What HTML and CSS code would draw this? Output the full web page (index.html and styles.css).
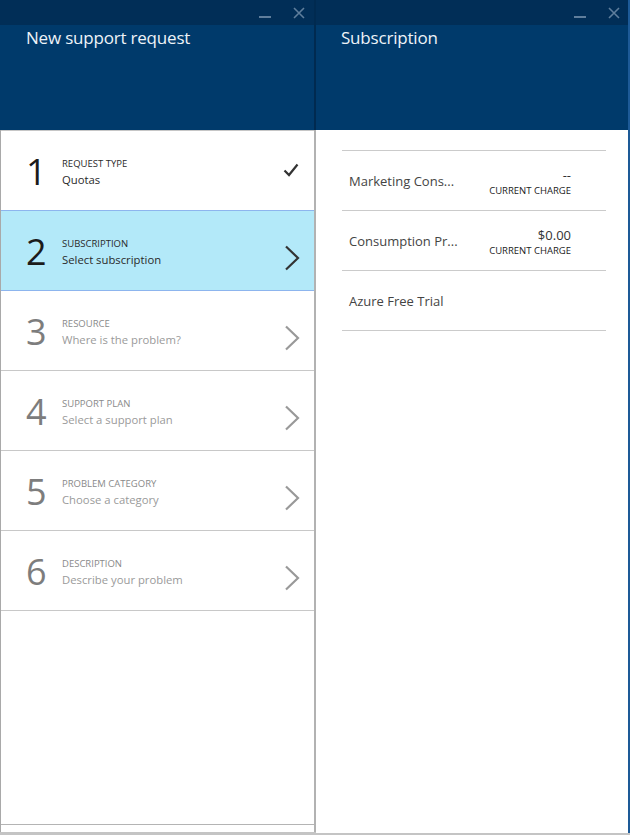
FILE: index.html
```html
<!DOCTYPE html>
<html lang="en">
<head>
<meta charset="utf-8">
<title>New support request</title>
<link rel="stylesheet" href="styles.css">
</head>
<body>
<div class="blades">
  <section class="blade blade-left">
    <header class="blade-header">
      <div class="topbar">
        <span class="ctl ctl-min"></span>
        <svg class="ctl-close" width="12" height="12" viewBox="0 0 12 12"><path d="M1 1L11 11M11 1L1 11" stroke="#5f7e9c" stroke-width="1.6" fill="none"/></svg>
      </div>
      <h1 class="blade-title">New support request</h1>
    </header>
    <div class="blade-body">
      <ul class="steps">
        <li class="step active">
          <span class="num">1</span>
          <div class="step-text">
            <div class="step-label">REQUEST TYPE</div>
            <div class="step-value">Quotas</div>
          </div>
          <svg class="check" width="16" height="14" viewBox="0 0 16 14"><path d="M1.5 7.5L6 12L14.5 1.5" stroke="#333" stroke-width="2.2" fill="none"/></svg>
        </li>
        <li class="step active selected">
          <span class="num">2</span>
          <div class="step-text">
            <div class="step-label">SUBSCRIPTION</div>
            <div class="step-value">Select subscription</div>
          </div>
          <svg class="chev" width="16" height="26" viewBox="0 0 16 26"><path d="M2 1.5L14 13L2 24.5" stroke="#333" stroke-width="2.2" fill="none"/></svg>
        </li>
        <li class="step">
          <span class="num">3</span>
          <div class="step-text">
            <div class="step-label">RESOURCE</div>
            <div class="step-value">Where is the problem?</div>
          </div>
          <svg class="chev" width="16" height="26" viewBox="0 0 16 26"><path d="M2 1.5L14 13L2 24.5" stroke="#999" stroke-width="2.2" fill="none"/></svg>
        </li>
        <li class="step">
          <span class="num">4</span>
          <div class="step-text">
            <div class="step-label">SUPPORT PLAN</div>
            <div class="step-value">Select a support plan</div>
          </div>
          <svg class="chev" width="16" height="26" viewBox="0 0 16 26"><path d="M2 1.5L14 13L2 24.5" stroke="#999" stroke-width="2.2" fill="none"/></svg>
        </li>
        <li class="step">
          <span class="num">5</span>
          <div class="step-text">
            <div class="step-label">PROBLEM CATEGORY</div>
            <div class="step-value">Choose a category</div>
          </div>
          <svg class="chev" width="16" height="26" viewBox="0 0 16 26"><path d="M2 1.5L14 13L2 24.5" stroke="#999" stroke-width="2.2" fill="none"/></svg>
        </li>
        <li class="step">
          <span class="num">6</span>
          <div class="step-text">
            <div class="step-label">DESCRIPTION</div>
            <div class="step-value">Describe your problem</div>
          </div>
          <svg class="chev" width="16" height="26" viewBox="0 0 16 26"><path d="M2 1.5L14 13L2 24.5" stroke="#999" stroke-width="2.2" fill="none"/></svg>
        </li>
      </ul>
      <div class="spacer"></div>
      <div class="blade-footer"></div>
    </div>
  </section>
  <section class="blade blade-right">
    <header class="blade-header">
      <div class="topbar">
        <span class="ctl ctl-min"></span>
        <svg class="ctl-close" width="12" height="12" viewBox="0 0 12 12"><path d="M1 1L11 11M11 1L1 11" stroke="#5f7e9c" stroke-width="1.6" fill="none"/></svg>
      </div>
      <h1 class="blade-title">Subscription</h1>
    </header>
    <div class="blade-body">
      <ul class="subs">
        <li class="sub">
          <span class="sub-name">Marketing Cons...</span>
          <div class="sub-charge">
            <div class="charge-value">--</div>
            <div class="charge-label">CURRENT CHARGE</div>
          </div>
        </li>
        <li class="sub">
          <span class="sub-name">Consumption Pr...</span>
          <div class="sub-charge">
            <div class="charge-value">$0.00</div>
            <div class="charge-label">CURRENT CHARGE</div>
          </div>
        </li>
        <li class="sub">
          <span class="sub-name">Azure Free Trial</span>
        </li>
      </ul>
    </div>
  </section>
</div>
</body>
</html>
```
FILE: styles.css
```css
* { box-sizing: border-box; }
html, body { margin: 0; padding: 0; }
body {
  background: #c4c4c4;
  font-family: "Open Sans", "Noto Sans", sans-serif;
  width: 630px;
  height: 835px;
  overflow: hidden;
}
ul { list-style: none; margin: 0; padding: 0; }

.blades { display: flex; align-items: flex-start; }

.blade { display: flex; flex-direction: column; background: #fff; }
.blade-left { width: 316px; height: 832px; }
.blade-right { width: 314px; height: 833px; border-right: 2px solid #1d5a97; }

.blade-header {
  height: 130px;
  background: #003a6b;
  display: flex;
  flex-direction: column;
}
.blade-left .blade-header { border-right: 2px solid #002a50; }

.topbar {
  height: 25px;
  background: #012e57;
  display: flex;
  justify-content: flex-end;
  align-items: flex-start;
  padding-right: 9px;
}
.blade-right .topbar { padding-right: 8px; }

.ctl-min {
  width: 12px;
  height: 2px;
  background: #5f7e9c;
  margin-top: 16px;
  margin-right: 22px;
}
.ctl-close { margin-top: 7px; }

.blade-title {
  margin: 1px 0 0 26px;
  font-size: 17px;
  font-weight: 400;
  color: #eef3f8;
  letter-spacing: -0.2px;
  line-height: 24px;
}
.blade-right .blade-title { margin-left: 25px; }

.blade-body { flex: 1; display: flex; flex-direction: column; }
.blade-left .blade-body {
  border-left: 1px solid #a9a9a9;
  border-right: 2px solid #b2b2b2;
}

.steps { border-top: 1px solid #c6c6c6; }
.step {
  height: 80px;
  border-bottom: 1px solid #c8c8c8;
  display: flex;
  align-items: center;
  padding-left: 25px;
  padding-right: 14px;
  padding-top: 2px;
}
.step.selected {
  background: #b3e9f9;
  border-bottom-color: #8db5ee;
  box-shadow: 0 -1px 0 #8db5ee;
}
.num {
  width: 36px;
  font-size: 36px;
  font-weight: 400;
  color: #7d7d7d;
  line-height: 40px;
}
.step.active .num { color: #1b1b1b; }
.step-text { flex: 1; padding-top: 2px; }
.step-label {
  font-size: 9.5px;
  color: #8a8a8a;
  line-height: 14px;
}
.step-value {
  font-size: 11.3px;
  color: #9a9a9a;
  line-height: 17px;
}
.step.active .step-label,
.step.active .step-value { color: #2a2a2a; }
.check { margin-top: -4px; margin-right: 1px; }
.chev { margin-top: 12px; }

.spacer { flex: 1; }
.blade-footer { height: 8px; border-top: 1px solid #b4b4b4; }

.subs {
  margin: 20px 22px 0 26px;
  border-top: 1px solid #cbcbcb;
}
.sub {
  height: 60px;
  border-bottom: 1px solid #cbcbcb;
  display: flex;
  align-items: center;
  justify-content: space-between;
  padding-left: 7px;
  padding-right: 35px;
}
.sub-name { font-size: 13px; color: #444; }
.sub-charge { text-align: right; padding-top: 2px; }
.charge-value { font-size: 13px; color: #333; line-height: 18px; }
.charge-label { font-size: 9.5px; color: #222; line-height: 13px; }
```
